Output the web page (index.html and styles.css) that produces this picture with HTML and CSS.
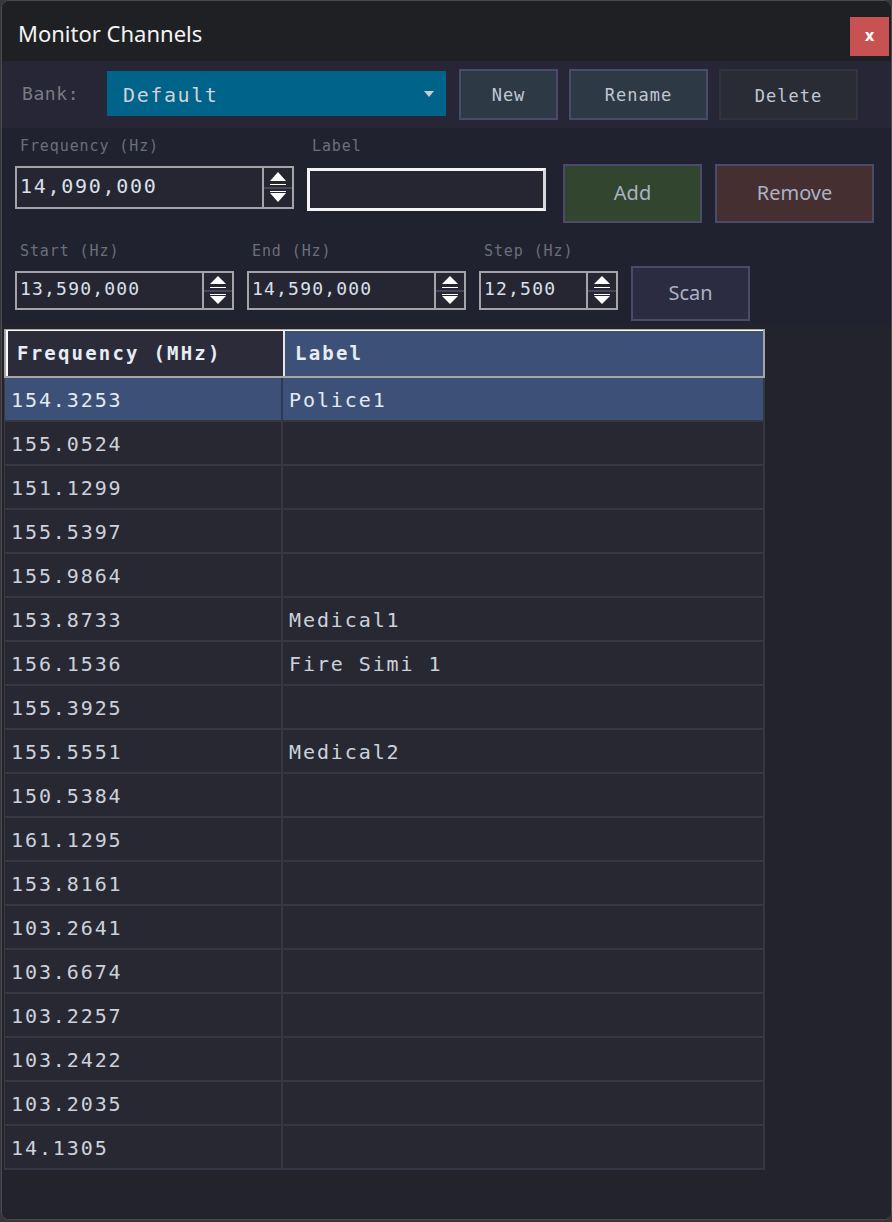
FILE: index.html
```html
<!DOCTYPE html>
<html>
<head>
<meta charset="utf-8">
<link rel="stylesheet" href="styles.css">
</head>
<body>
<div class="window">
  <div class="titlebar">
    <div class="title">Monitor Channels</div>
    <div class="close">x</div>
  </div>
  <div class="bankrow">
    <div class="banklabel">Bank:</div>
    <div class="combo"><span>Default</span>
      <svg class="caret" width="10" height="6" viewBox="0 0 10 6"><path d="M0 0H10L5 6Z" fill="#c9ccd2"/></svg>
    </div>
    <div class="btn mono b-new">New</div>
    <div class="btn mono b-rename">Rename</div>
    <div class="btn mono b-delete">Delete</div>
  </div>
  <div class="panel">
    <div class="rowa">
      <div class="field f-freq">
        <div class="flabel">Frequency (Hz)</div>
        <div class="spin big">
          <div class="val">14,090,000</div>
          <div class="arrows">
            <svg width="28" height="39" viewBox="0 0 28 39"><path d="M14 4L22 13H6Z" fill="#fff"/><path d="M6 16H22V17H6Z" fill="#fff"/><rect x="0" y="19" width="28" height="2" fill="#45455e"/><path d="M6 23H22V24H6Z" fill="#fff"/><path d="M6 25H22L14 34Z" fill="#fff"/></svg>
          </div>
        </div>
      </div>
      <div class="field f-label">
        <div class="flabel">Label</div>
        <div class="textbox"></div>
      </div>
      <div class="btn sans b-add">Add</div>
      <div class="btn sans b-remove">Remove</div>
    </div>
    <div class="rowb">
      <div class="field f-start">
        <div class="flabel">Start (Hz)</div>
        <div class="spin small">
          <div class="val">13,590,000</div>
          <div class="arrows">
            <svg width="28" height="35" viewBox="0 0 28 35"><path d="M14 3L22 11H6Z" fill="#fff"/><path d="M6 14H22V15H6Z" fill="#fff"/><rect x="0" y="17" width="28" height="2" fill="#45455e"/><path d="M6 21H22V22H6Z" fill="#fff"/><path d="M6 23H22L14 31Z" fill="#fff"/></svg>
          </div>
        </div>
      </div>
      <div class="field f-end">
        <div class="flabel">End (Hz)</div>
        <div class="spin small">
          <div class="val">14,590,000</div>
          <div class="arrows">
            <svg width="28" height="35" viewBox="0 0 28 35"><path d="M14 3L22 11H6Z" fill="#fff"/><path d="M6 14H22V15H6Z" fill="#fff"/><rect x="0" y="17" width="28" height="2" fill="#45455e"/><path d="M6 21H22V22H6Z" fill="#fff"/><path d="M6 23H22L14 31Z" fill="#fff"/></svg>
          </div>
        </div>
      </div>
      <div class="field f-step">
        <div class="flabel">Step (Hz)</div>
        <div class="spin small">
          <div class="val">12,500</div>
          <div class="arrows">
            <svg width="28" height="35" viewBox="0 0 28 35"><path d="M14 3L22 11H6Z" fill="#fff"/><path d="M6 14H22V15H6Z" fill="#fff"/><rect x="0" y="17" width="28" height="2" fill="#45455e"/><path d="M6 21H22V22H6Z" fill="#fff"/><path d="M6 23H22L14 31Z" fill="#fff"/></svg>
          </div>
        </div>
      </div>
      <div class="btn sans b-scan">Scan</div>
    </div>
  </div>
  <div class="tablearea">
    <div class="table">
      <div class="thead">
        <div class="th th1">Frequency (MHz)</div>
        <div class="th th2">Label</div>
      </div>
      <div class="tr sel"><div class="td c1">154.3253</div><div class="td c2">Police1</div></div>
      <div class="tr"><div class="td c1">155.0524</div><div class="td c2"></div></div>
      <div class="tr"><div class="td c1">151.1299</div><div class="td c2"></div></div>
      <div class="tr"><div class="td c1">155.5397</div><div class="td c2"></div></div>
      <div class="tr"><div class="td c1">155.9864</div><div class="td c2"></div></div>
      <div class="tr"><div class="td c1">153.8733</div><div class="td c2">Medical1</div></div>
      <div class="tr"><div class="td c1">156.1536</div><div class="td c2">Fire Simi 1</div></div>
      <div class="tr"><div class="td c1">155.3925</div><div class="td c2"></div></div>
      <div class="tr"><div class="td c1">155.5551</div><div class="td c2">Medical2</div></div>
      <div class="tr"><div class="td c1">150.5384</div><div class="td c2"></div></div>
      <div class="tr"><div class="td c1">161.1295</div><div class="td c2"></div></div>
      <div class="tr"><div class="td c1">153.8161</div><div class="td c2"></div></div>
      <div class="tr"><div class="td c1">103.2641</div><div class="td c2"></div></div>
      <div class="tr"><div class="td c1">103.6674</div><div class="td c2"></div></div>
      <div class="tr"><div class="td c1">103.2257</div><div class="td c2"></div></div>
      <div class="tr"><div class="td c1">103.2422</div><div class="td c2"></div></div>
      <div class="tr"><div class="td c1">103.2035</div><div class="td c2"></div></div>
      <div class="tr"><div class="td c1">14.1305</div><div class="td c2"></div></div>
    </div>
  </div>
</div>
</body>
</html>
```
FILE: styles.css
```css
* { box-sizing: border-box; }
html, body { margin: 0; padding: 0; }
body {
  width: 892px;
  height: 1222px;
  background: #3a3536;
  overflow: hidden;
  font-family: "DejaVu Sans Mono", monospace;
}
.window {
  width: 891px;
  height: 1220px;
  margin-left: 1px;
  border: 1px solid #4a4a52;
  border-radius: 8px;
  background: #23232c;
  overflow: hidden;
  display: flex;
  flex-direction: column;
}
.titlebar {
  height: 60px;
  background: #1f2023;
  display: flex;
  align-items: flex-start;
  flex-shrink: 0;
}
.title {
  font-family: "Noto Sans", "Open Sans", sans-serif;
  font-size: 22px;
  color: #f4f4f4;
  margin-left: 16px;
  margin-top: 17px;
  line-height: 30px;
}
.close {
  margin-left: auto;
  margin-right: 2px;
  margin-top: 16px;
  width: 39px;
  height: 39px;
  background: #c85252;
  color: #fff;
  font-family: "DejaVu Sans", sans-serif;
  font-weight: bold;
  font-size: 15px;
  display: flex;
  align-items: center;
  justify-content: center;
  padding-bottom: 2px;
}
.bankrow {
  height: 67px;
  background: #262636;
  display: flex;
  align-items: flex-start;
  padding-left: 20px;
  flex-shrink: 0;
}
.banklabel {
  color: #7a7c84;
  font-size: 18px;
  letter-spacing: 0.6px;
  margin-top: 22px;
  width: 85px;
}
.combo {
  width: 339px;
  height: 45px;
  margin-top: 10px;
  background: #00638a;
  color: #cfd3d8;
  font-size: 20px;
  letter-spacing: 1.6px;
  display: flex;
  align-items: center;
  padding-left: 16px;
  padding-top: 2px;
  padding-right: 12px;
}
.combo .caret { margin-left: auto; margin-top: -2px; }
.btn {
  display: flex;
  align-items: center;
  justify-content: center;
  border: 2px solid #4a4a6a;
}
.btn.mono {
  font-size: 17px;
  letter-spacing: 1px;
  color: #c0c8d4;
  height: 51px;
  margin-top: 8px;
  background: #2d3944;
}
.b-new { width: 99px; margin-left: 13px; }
.b-rename { width: 139px; margin-left: 11px; }
.b-delete { width: 139px; margin-left: 11px; background: #2a2c35 !important; border-color: #333340 !important; padding-top: 3px; }
.btn.sans {
  font-family: "Noto Sans", "Open Sans", sans-serif;
  font-size: 20px;
  color: #aab3c4;
}
.panel {
  height: 197px;
  background: #212230;
  flex-shrink: 0;
  padding-left: 13px;
}
.rowa { display: flex; align-items: flex-start; height: 120px; }
.rowb { display: flex; align-items: flex-start; }
.field { display: flex; flex-direction: column; }
.flabel {
  color: #6b6f79;
  font-size: 15px;
  letter-spacing: 0.9px;
  padding-left: 5px;
  height: 18px;
  line-height: 18px;
}
.rowa .flabel { margin-top: 9px; margin-bottom: 11px; }
.rowb .field .flabel { margin-top: -6px; margin-bottom: 11px; }
.spin {
  display: flex;
  border: 2px solid #a3a3a8;
  background: #262633;
}
.spin .val {
  flex: 1;
  color: #d9e0ea;
  display: flex;
  align-items: center;
  padding-left: 3px;
}
.spin .arrows {
  width: 30px;
  border-left: 2px solid #a3a3a8;
  display: flex;
  align-items: center;
}
.spin.big { width: 279px; height: 43px; }
.spin.big .val { font-size: 20px; letter-spacing: 1.7px; padding-bottom: 4px; }
.spin.small { height: 39px; }
.spin.small .val { font-size: 18px; letter-spacing: 1.2px; padding-bottom: 4px; }
.f-freq { width: 279px; }
.f-label { margin-left: 13px; }
.f-label .flabel { padding-left: 5px; }
.textbox {
  width: 239px;
  height: 43px;
  margin-top: 2px;
  border: 3px solid #f4f4f4;
  border-right-color: #d8d8d8;
  background: #262633;
}
.b-add {
  width: 139px; height: 59px; margin-left: 17px; margin-top: 36px;
  background: #32452f;
  padding-bottom: 2px;
}
.b-remove {
  width: 159px; height: 59px; margin-left: 13px; margin-top: 36px;
  background: #452f31;
  padding-bottom: 2px;
}
.f-start .spin { width: 219px; }
.f-end { margin-left: 13px; }
.f-end .spin { width: 219px; }
.f-step { margin-left: 13px; }
.f-step .spin { width: 139px; }
.b-scan {
  width: 119px; height: 55px; margin-left: 13px; margin-top: 18px;
  background: #2b2b41;
  padding-bottom: 2px;
}
.tablearea {
  flex: 1;
  padding-left: 2px;
  padding-top: 4px;
  background: #23232c;
}
.table {
  width: 761px;
  border-left: 1px solid #3a3a4a;
}
.thead {
  display: flex;
  height: 49px;
  border: 2px solid #a5a5a8;
  border-top: 1px solid #a5a5a8;
  margin-left: -1px;
}
.th {
  display: flex;
  align-items: center;
  font-weight: bold;
  font-size: 19px;
  letter-spacing: 2.2px;
  color: #e6edf5;
  padding-bottom: 1px;
}
.th1 {
  width: 279px;
  background: #2b2b3a;
  padding-left: 9px;
  border-left: 2px solid #ffffff;
  border-top: 1px solid #ffffff;
  border-right: 2px solid #e8e8e8;
}
.th2 {
  flex: 1;
  background: #3d5178;
  padding-left: 10px;
  border-top: 1px solid #ffffff;
}
.tr {
  display: flex;
  height: 44px;
  border-bottom: 2px solid #363645;
  border-right: 2px solid #363645;
}
.td {
  display: flex;
  align-items: center;
  font-size: 20px;
  letter-spacing: 1.9px;
  color: #cbd2dc;
  background: #282833;
  padding-top: 2px;
}
.c1 { width: 278px; padding-left: 6px; border-right: 2px solid #363645; }
.c2 { flex: 1; padding-left: 6px; }
.tr.sel .td { background: #3d5178; color: #e4eaf2; }
.tr.sel .c1 { border-right-color: #2c3a55; }
```
